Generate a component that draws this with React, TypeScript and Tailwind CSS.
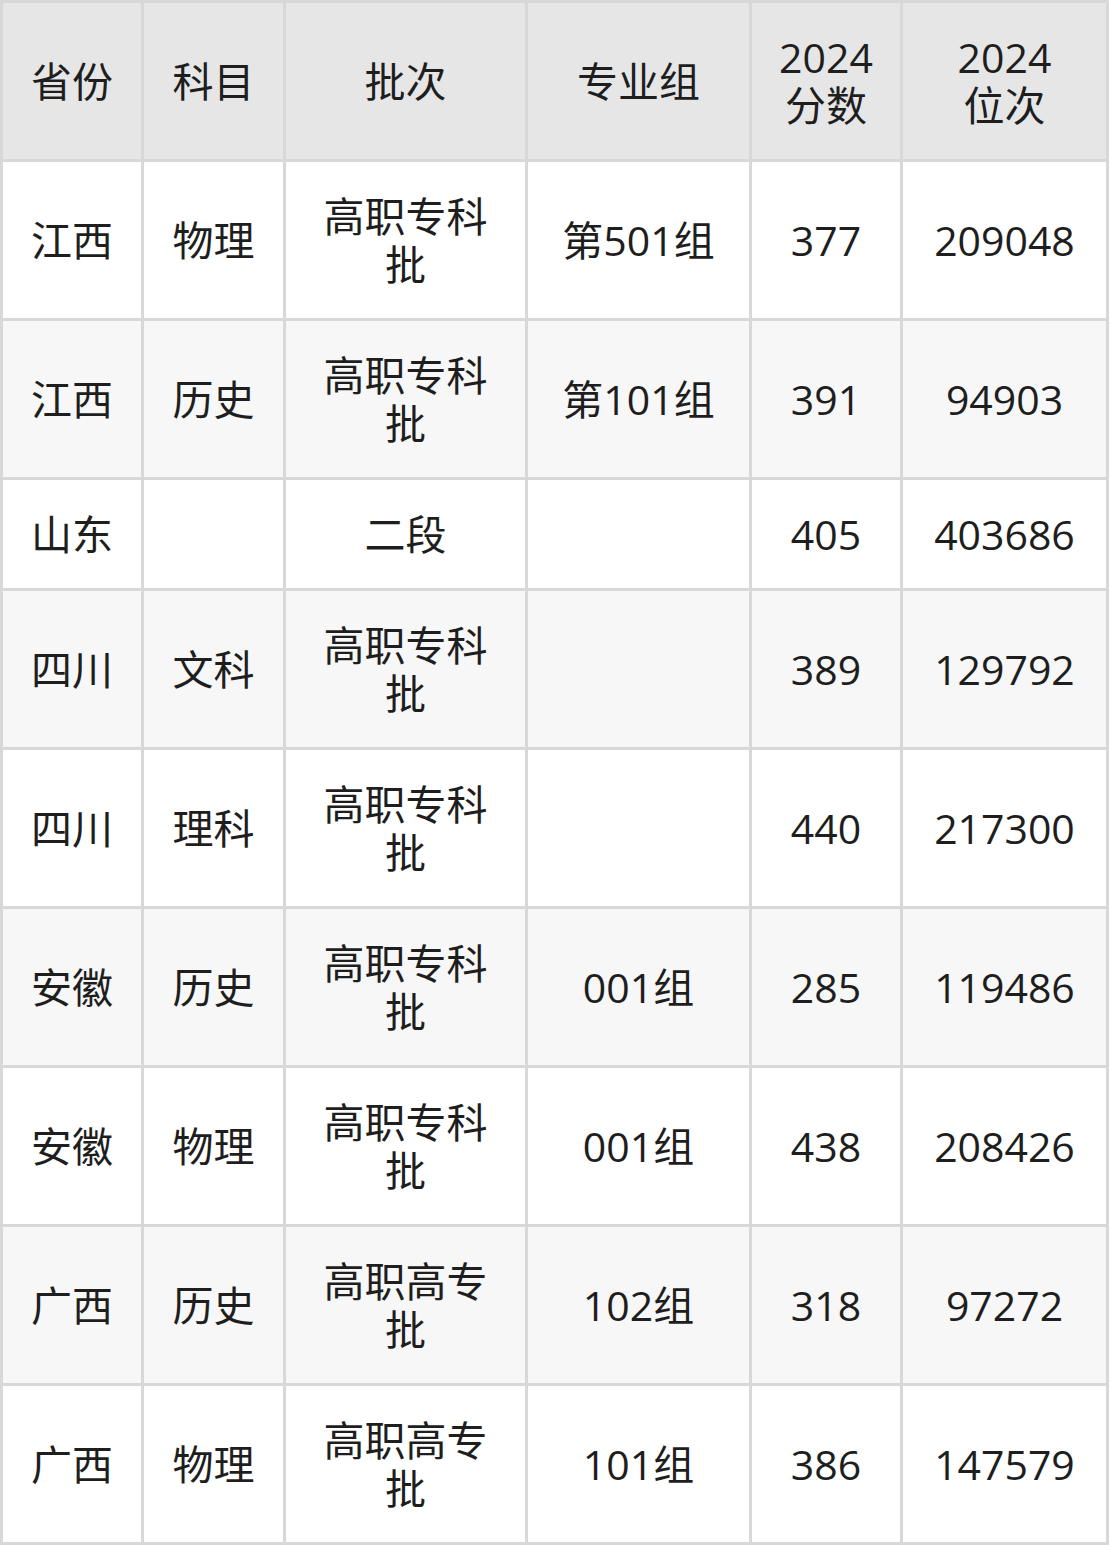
import React from "react";

type Row = [string, string, string[], string, string, string];

const rows: Row[] = [
  ["江西", "物理", ["高职专科", "批"], "第501组", "377", "209048"],
  ["江西", "历史", ["高职专科", "批"], "第101组", "391", "94903"],
  ["山东", "", ["二段"], "", "405", "403686"],
  ["四川", "文科", ["高职专科", "批"], "", "389", "129792"],
  ["四川", "理科", ["高职专科", "批"], "", "440", "217300"],
  ["安徽", "历史", ["高职专科", "批"], "001组", "285", "119486"],
  ["安徽", "物理", ["高职专科", "批"], "001组", "438", "208426"],
  ["广西", "历史", ["高职高专", "批"], "102组", "318", "97272"],
  ["广西", "物理", ["高职高专", "批"], "101组", "386", "147579"],
];

const header: string[][] = [
  ["省份"],
  ["科目"],
  ["批次"],
  ["专业组"],
  ["2024", "分数"],
  ["2024", "位次"],
];

function Cell({ lines, bg }: { lines: string[]; bg: string }) {
  return (
    <div
      className={`flex flex-col items-center justify-center text-center py-[30px] leading-[48px] ${bg}`}
    >
      {lines.map((l, i) => (
        <span key={i} className="block whitespace-nowrap">
          {l === "" ? "\u00a0" : l}
        </span>
      ))}
    </div>
  );
}

export default function App() {
  return (
    <div className="bg-white w-[1110px] min-h-[1545px]">
      <div className="grid w-fit grid-cols-[138px_139px_239px_221px_148px_203px] gap-[3px] p-[3px] bg-[#d8d8d8] font-['Open_Sans','Noto_Sans_CJK_SC',sans-serif] text-[41px] text-[#1e1e1e]">
        {header.map((h, i) => (
          <Cell key={`h${i}`} lines={h} bg="bg-[#e6e6e6]" />
        ))}
        {rows.map((r, ri) => {
          const bg = ri % 2 === 1 ? "bg-[#f7f7f7]" : "bg-white";
          return (
            <React.Fragment key={ri}>
              <Cell lines={[r[0]]} bg={bg} />
              <Cell lines={[r[1]]} bg={bg} />
              <Cell lines={r[2]} bg={bg} />
              <Cell lines={[r[3]]} bg={bg} />
              <Cell lines={[r[4]]} bg={bg} />
              <Cell lines={[r[5]]} bg={bg} />
            </React.Fragment>
          );
        })}
      </div>
    </div>
  );
}
